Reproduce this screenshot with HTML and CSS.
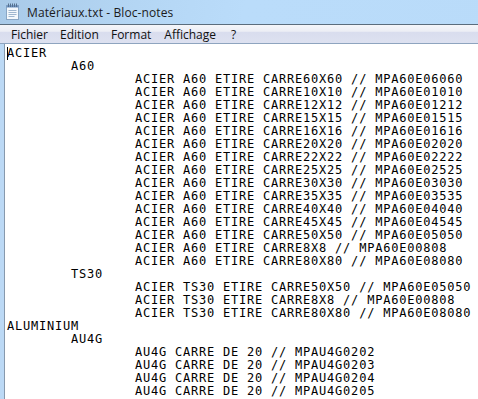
FILE: index.html
```html
<!DOCTYPE html>
<html lang="fr">
<head>
  <meta charset="UTF-8">
  <title>Matériaux.txt - Bloc-notes</title>
  <link rel="stylesheet" href="styles.css">
</head>
<body>
  <div class="window">
    <div class="titlebar">
      <svg class="appicon" width="16" height="17" viewBox="0 0 16 17">
        <rect x="1.5" y="2.5" width="12" height="14" fill="#e6f0fa" stroke="#8aa6c4"/>
        <rect x="2" y="3" width="11" height="13" fill="#f4f8fc"/>
        <line x1="3.5" y1="7.5" x2="11.5" y2="7.5" stroke="#9fb6cf"/>
        <line x1="3.5" y1="9.5" x2="11.5" y2="9.5" stroke="#9fb6cf"/>
        <line x1="3.5" y1="11.5" x2="11.5" y2="11.5" stroke="#9fb6cf"/>
        <line x1="3.5" y1="13.5" x2="9.5" y2="13.5" stroke="#9fb6cf"/>
        <rect x="1.5" y="2.5" width="12" height="2" fill="#6d93c2"/>
        <g stroke="#55708f" stroke-width="1">
          <line x1="3.5" y1="0.5" x2="3.5" y2="4"/>
          <line x1="5.5" y1="0.5" x2="5.5" y2="4"/>
          <line x1="7.5" y1="0.5" x2="7.5" y2="4"/>
          <line x1="9.5" y1="0.5" x2="9.5" y2="4"/>
          <line x1="11.5" y1="0.5" x2="11.5" y2="4"/>
        </g>
      </svg>
      <span class="title">Matériaux.txt - Bloc-notes</span>
    </div>
    <div class="menubar">
      <span class="menu">Fichier</span>
      <span class="menu">Edition</span>
      <span class="menu">Format</span>
      <span class="menu">Affichage</span>
      <span class="menu">?</span>
    </div>
    <div class="body">
      <div class="frame"></div>
<pre class="editor"><span class="caret"></span>ACIER
	A60
		ACIER A60 ETIRE CARRE60X60 // MPA60E06060
		ACIER A60 ETIRE CARRE10X10 // MPA60E01010
		ACIER A60 ETIRE CARRE12X12 // MPA60E01212
		ACIER A60 ETIRE CARRE15X15 // MPA60E01515
		ACIER A60 ETIRE CARRE16X16 // MPA60E01616
		ACIER A60 ETIRE CARRE20X20 // MPA60E02020
		ACIER A60 ETIRE CARRE22X22 // MPA60E02222
		ACIER A60 ETIRE CARRE25X25 // MPA60E02525
		ACIER A60 ETIRE CARRE30X30 // MPA60E03030
		ACIER A60 ETIRE CARRE35X35 // MPA60E03535
		ACIER A60 ETIRE CARRE40X40 // MPA60E04040
		ACIER A60 ETIRE CARRE45X45 // MPA60E04545
		ACIER A60 ETIRE CARRE50X50 // MPA60E05050
		ACIER A60 ETIRE CARRE8X8 // MPA60E00808
		ACIER A60 ETIRE CARRE80X80 // MPA60E08080
	TS30
		ACIER TS30 ETIRE CARRE50X50 // MPA60E05050
		ACIER TS30 ETIRE CARRE8X8 // MPA60E00808
		ACIER TS30 ETIRE CARRE80X80 // MPA60E08080
ALUMINIUM
	AU4G
		AU4G CARRE DE 20 // MPAU4G0202
		AU4G CARRE DE 20 // MPAU4G0203
		AU4G CARRE DE 20 // MPAU4G0204
		AU4G CARRE DE 20 // MPAU4G0205
</pre>
    </div>
  </div>
</body>
</html>
```

FILE: styles.css
```css
body { margin: 0; background: #fff; }
.window { width: 478px; height: 399px; overflow: hidden; display: flex; flex-direction: column;
  background: linear-gradient(100deg, #a9cae8 0%, #b4d6f4 25%, #badcfa 45%, #b9dbf9 100%); }

.titlebar { height: 24px; display: flex; align-items: center; gap: 6px; padding-left: 5px; flex: none; }
.appicon { flex: none; margin-top: -1px; }
.title { font-family: "Open Sans", "Noto Sans", sans-serif; font-size: 12px; color: #1b1b1b; letter-spacing: 0.1px; }

.menubar { height: 18px; flex: none; display: flex; align-items: center; padding: 1px 0 0 11px; box-sizing: border-box; height: 20px;
  border-top: 1px solid #5b6d7d; border-bottom: 1px solid #8ea4bf;
  background: linear-gradient(#f5f6fa 0%, #eceef5 35%, #d9ddee 40%, #dde1f0 100%);
  font-family: "Open Sans", "Noto Sans", sans-serif; font-size: 12px; color: #111; }
.menu:nth-child(1) { margin-right: 12px; }
.menu:nth-child(2) { margin-right: 12px; }
.menu:nth-child(3) { margin-right: 13px; }
.menu:nth-child(4) { margin-right: 15px; }

.body { flex: 1; display: flex; min-height: 0; }
.frame { width: 4px; flex: none; background: #bcd9f5; border-right: 1px solid #8799ad; }
.editor { flex: 1; margin: 0; padding: 3px 0 0 2px; background: #fff; overflow: hidden;
  font-family: "DejaVu Sans Mono", monospace; font-size: 12px; line-height: 13px;
  letter-spacing: 0.78px; tab-size: 64px; color: #000; }
.caret { display: inline-block; width: 0; height: 13px; border-left: 1px solid #000; margin-right: -1px; vertical-align: top; }
```
